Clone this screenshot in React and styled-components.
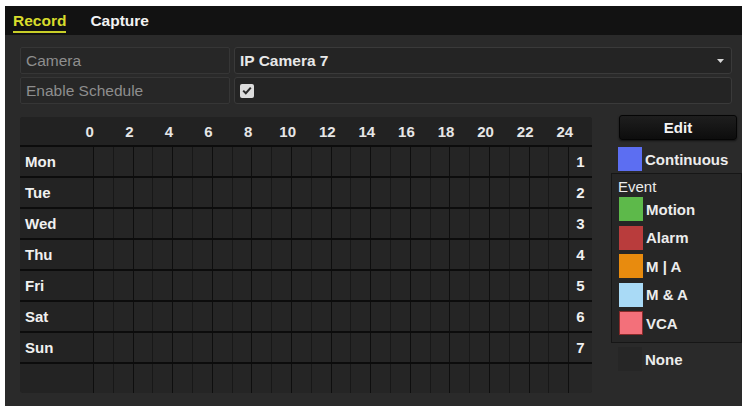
import React from 'react';
import styled, { createGlobalStyle } from 'styled-components';

const GlobalStyle = createGlobalStyle`
  html, body { margin: 0; padding: 0; background: #ffffff; }
  body { font-family: "Liberation Sans", Arial, sans-serif; }
  * { box-sizing: border-box; }
`;

const Frame = styled.div`
  margin: 6px 4px 0 5px;
  height: 400px;
  background: #2a2a2a;
  display: flex;
  flex-direction: column;
`;

const TabBar = styled.div`
  height: 29px;
  background: #121212;
  display: flex;
  align-items: center;
  gap: 24px;
  padding-left: 8px;
`;

const Tab = styled.div`
  font-size: 15.5px;
  font-weight: bold;
  line-height: 18px;
  color: ${(p) => (p.$active ? '#d8dd2c' : '#f2f2f2')};
  padding-bottom: 1px;
  margin-top: 4px;
  border-bottom: 2px solid ${(p) => (p.$active ? '#c8ce28' : 'transparent')};
`;

const Content = styled.div`
  padding: 12px 0 0 15px;
  display: flex;
  flex-direction: column;
`;

const FieldRow = styled.div`
  display: flex;
  gap: 4px;
  height: 27px;
  margin: 0 10px 3px 0;
`;

const FieldLabel = styled.div`
  width: 210px;
  background: #272727;
  border: 1px solid #363636;
  border-radius: 2px;
  color: #8e8e8e;
  font-size: 15.5px;
  padding-left: 5px;
  display: flex;
  align-items: center;
`;

const FieldValue = styled.div`
  flex: 1;
  background: #242424;
  border: 1px solid #3a3a3a;
  border-radius: 3px;
  padding: 0 6px 0 5px;
  color: #e8e8e8;
  font-size: 15.5px;
  font-weight: bold;
  display: flex;
  align-items: center;
  justify-content: space-between;
`;

const Checkbox = styled.div`
  width: 14px;
  height: 14px;
  background: #dcdcdc;
  border-radius: 2px;
  display: flex;
  align-items: center;
  justify-content: center;
`;

const ScheduleArea = styled.div`
  margin-top: 10px;
  display: flex;
  gap: 19px;
`;

const Grid = styled.div`
  width: 572px;
  height: 276px;
  background: #232323;
  border-radius: 3px;
  display: flex;
  flex-direction: column;
  overflow: hidden;
`;

const HeaderRow = styled.div`
  height: 28px;
  display: flex;
  align-items: center;
  padding-left: 50px;
  background: #222222;
`;

const HourLabel = styled.div`
  width: 39.58px;
  text-align: center;
  font-size: 15px;
  font-weight: bold;
  color: #e6e6e6;
`;

const DayRow = styled.div`
  height: 31px;
  display: flex;
  border-top: 2px solid #0c0c0c;
`;

const DayLabel = styled.div`
  width: 73px;
  padding-left: 5px;
  display: flex;
  align-items: center;
  font-size: 15px;
  font-weight: bold;
  color: #f0f0f0;
`;

const HourTrack = styled.div`
  flex: 1;
  display: flex;
`;

const HourCell = styled.div`
  flex: 1;
  border-left: 1px solid ${(p) => (p.$even ? '#0e0e0e' : '#181818')};
  background: #252525;
`;

const RowNumber = styled.div`
  width: 24px;
  border-left: 1px solid #0f0f0f;
  display: flex;
  align-items: center;
  justify-content: center;
  font-size: 15px;
  font-weight: bold;
  color: #f0f0f0;
  background: #262626;
`;

const SidePanel = styled.div`
  flex: 1;
  display: flex;
  flex-direction: column;
  margin-top: -2px;
`;

const EditButton = styled.div`
  margin-left: 8px;
  width: 118px;
  height: 25px;
  background: linear-gradient(#1e1e1e, #0d0d0d);
  border: 1px solid #050505;
  border-radius: 3px;
  box-shadow: 0 1px 2px rgba(0, 0, 0, 0.6);
  color: #f4f4f4;
  font-size: 15px;
  font-weight: bold;
  display: flex;
  align-items: center;
  justify-content: center;
`;

const LegendItem = styled.div`
  display: flex;
  align-items: center;
  gap: 3px;
  height: 24px;
  padding-left: ${(p) => p.$indent || 0}px;
  margin-top: ${(p) => p.$top || 0}px;
  font-size: 15px;
  font-weight: bold;
  color: #ececec;
`;

const Swatch = styled.div`
  width: 24px;
  height: 24px;
  background: ${(p) => p.$color};
  border: 1px solid ${(p) => p.$edge || 'transparent'};
`;

const EventBox = styled.div`
  margin-top: 2px;
  background: #262626;
  border: 1px solid #161616;
  padding: 4px 0 7px 6px;
  display: flex;
  flex-direction: column;
  gap: 4.5px;
`;

const EventTitle = styled.div`
  font-size: 15px;
  color: #ececec;
  line-height: 18px;
  margin-bottom: -3.5px;
`;

const hours = [0, 2, 4, 6, 8, 10, 12, 14, 16, 18, 20, 22, 24];
const days = ['Mon', 'Tue', 'Wed', 'Thu', 'Fri', 'Sat', 'Sun'];
const events = [
  { name: 'Motion', color: '#5db94a' },
  { name: 'Alarm', color: '#b93c3c' },
  { name: 'M | A', color: '#e88b0e' },
  { name: 'M & A', color: '#a9daf6' },
  { name: 'VCA', color: '#f3707a', edge: '#8a2a2a' },
];

function Track() {
  return (
    <HourTrack>
      {Array.from({ length: 24 }, (_, i) => (
        <HourCell key={i} $even={i % 2 === 0} />
      ))}
    </HourTrack>
  );
}

export default function App() {
  return (
    <>
      <GlobalStyle />
      <Frame>
        <TabBar>
          <Tab $active>Record</Tab>
          <Tab>Capture</Tab>
        </TabBar>
        <Content>
          <FieldRow>
            <FieldLabel>Camera</FieldLabel>
            <FieldValue>
              <span>IP Camera 7</span>
              <svg width="9" height="6" viewBox="0 0 9 6">
                <path d="M1 1 L4.5 5 L8 1 Z" fill="#d8d8d8" />
              </svg>
            </FieldValue>
          </FieldRow>
          <FieldRow>
            <FieldLabel>Enable Schedule</FieldLabel>
            <FieldValue>
              <Checkbox>
                <svg width="10" height="9" viewBox="0 0 10 9">
                  <path d="M1.2 4.6 L3.8 7.2 L8.8 1.6" fill="none" stroke="#2a2a2a" strokeWidth="2" />
                </svg>
              </Checkbox>
            </FieldValue>
          </FieldRow>
          <ScheduleArea>
            <Grid>
              <HeaderRow>
                {hours.map((h) => (
                  <HourLabel key={h}>{h}</HourLabel>
                ))}
              </HeaderRow>
              {days.map((d, i) => (
                <DayRow key={d}>
                  <DayLabel>{d}</DayLabel>
                  <Track />
                  <RowNumber>{i + 1}</RowNumber>
                </DayRow>
              ))}
              <DayRow>
                <DayLabel />
                <Track />
                <RowNumber />
              </DayRow>
            </Grid>
            <SidePanel>
              <EditButton>Edit</EditButton>
              <LegendItem $indent={7} $top={7}>
                <Swatch $color="#5c6ef2" />
                Continuous
              </LegendItem>
              <EventBox>
                <EventTitle>Event</EventTitle>
                {events.map((e) => (
                  <LegendItem key={e.name} $indent={1}>
                    <Swatch $color={e.color} $edge={e.edge} />
                    {e.name}
                  </LegendItem>
                ))}
              </EventBox>
              <LegendItem $indent={7} $top={4}>
                <Swatch $color="#262626" />
                None
              </LegendItem>
            </SidePanel>
          </ScheduleArea>
        </Content>
      </Frame>
    </>
  );
}
